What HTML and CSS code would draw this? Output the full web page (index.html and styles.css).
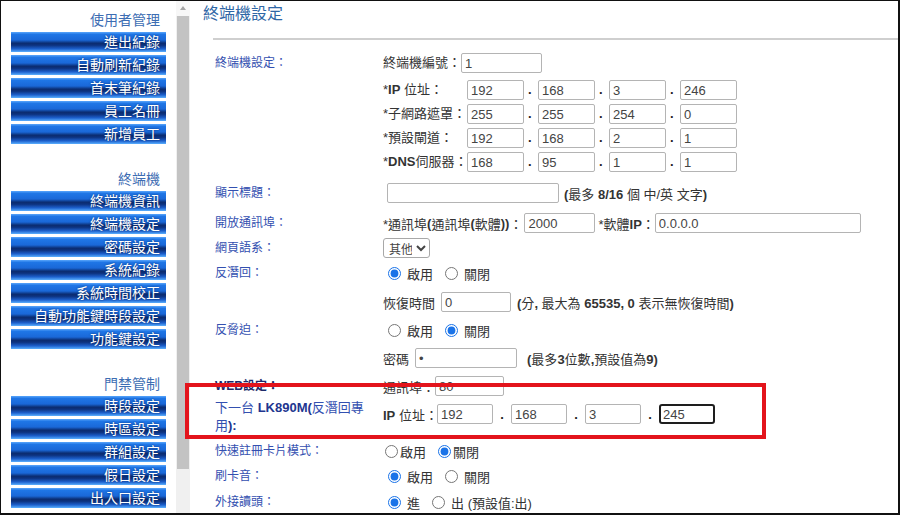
FILE: index.html
```html
<!DOCTYPE html>
<html>
<head>
<meta charset="utf-8">
<title>終端機設定</title>
<link rel="stylesheet" href="styles.css">
</head>
<body>
<div class="frame">

  <div class="menu">
    <div class="group">
      <div class="group-title">使用者管理</div>
      <a class="btn">進出紀錄</a>
      <a class="btn">自動刷新紀錄</a>
      <a class="btn">首末筆紀錄</a>
      <a class="btn">員工名冊</a>
      <a class="btn">新增員工</a>
    </div>
    <div class="group">
      <div class="group-title">終端機</div>
      <a class="btn">終端機資訊</a>
      <a class="btn">終端機設定</a>
      <a class="btn">密碼設定</a>
      <a class="btn">系統紀錄</a>
      <a class="btn">系統時間校正</a>
      <a class="btn">自動功能鍵時段設定</a>
      <a class="btn">功能鍵設定</a>
    </div>
    <div class="group">
      <div class="group-title">門禁管制</div>
      <a class="btn">時段設定</a>
      <a class="btn">時區設定</a>
      <a class="btn">群組設定</a>
      <a class="btn">假日設定</a>
      <a class="btn">出入口設定</a>
    </div>
  </div>

  <div class="scroll">
    <div class="scroll-up"><span class="arrow"></span></div>
    <div class="thumb"></div>
  </div>

  <div class="main">
    <h1 class="page-title">終端機設定</h1>
    <div class="rule"></div>

    <div class="form">
      <div class="row h130">
        <div class="label">終端機設定：</div>
        <div class="value stack">
          <div class="sub first">終端機編號：<input class="txt w-id" value="1"></div>
          <div class="sub"><span class="sub-label">*<b>IP</b> 位址：</span><input class="txt ip" value="192"><span class="dot">.</span><input class="txt ip" value="168"><span class="dot">.</span><input class="txt ip" value="3"><span class="dot">.</span><input class="txt ip" value="246"></div>
          <div class="sub"><span class="sub-label">*子網路遮罩：</span><input class="txt ip" value="255"><span class="dot">.</span><input class="txt ip" value="255"><span class="dot">.</span><input class="txt ip" value="254"><span class="dot">.</span><input class="txt ip" value="0"></div>
          <div class="sub"><span class="sub-label">*預設閘道：</span><input class="txt ip" value="192"><span class="dot">.</span><input class="txt ip" value="168"><span class="dot">.</span><input class="txt ip" value="2"><span class="dot">.</span><input class="txt ip" value="1"></div>
          <div class="sub"><span class="sub-label">*<b>DNS</b>伺服器：</span><input class="txt ip" value="168"><span class="dot">.</span><input class="txt ip" value="95"><span class="dot">.</span><input class="txt ip" value="1"><span class="dot">.</span><input class="txt ip" value="1"></div>
        </div>
      </div>

      <div class="row h30">
        <div class="label">顯示標題：</div>
        <div class="value"><input class="txt w-title" value=""><span class="note"><b>(</b>最多 <b>8/16</b> 個 中/英 文字<b>)</b></span></div>
      </div>

      <div class="row h25">
        <div class="label">開放通訊埠：</div>
        <div class="value">*通訊埠<b>(</b>通訊埠<b>(</b>軟體<b>))</b>：<input class="txt w-port" value="2000"><span class="gap3">*軟體<b>IP</b>：</span><input class="txt w-softip" value="0.0.0.0"></div>
      </div>

      <div class="row h25">
        <div class="label">網頁語系：</div>
        <div class="value"><select class="sel"><option>其他</option></select></div>
      </div>

      <div class="row h29">
        <div class="label">反潛回：</div>
        <div class="value"><label class="opt"><input type="radio" name="apb" checked>啟用</label><label class="opt"><input type="radio" name="apb">關閉</label></div>
      </div>

      <div class="row h28">
        <div class="label"></div>
        <div class="value">恢復時間<input class="txt w-time" value="0"><span class="note wide"><b>(</b>分<b>,</b> 最大為 <b>65535, 0</b> 表示無恢復時間<b>)</b></span></div>
      </div>

      <div class="row h28">
        <div class="label">反脅迫：</div>
        <div class="value"><label class="opt"><input type="radio" name="duress">啟用</label><label class="opt"><input type="radio" name="duress" checked>關閉</label></div>
      </div>

      <div class="row h28">
        <div class="label"></div>
        <div class="value">密碼<input class="txt w-pwd" type="password" value="9"><span class="note far"><b>(</b>最多<b>3</b>位數<b>,</b>預設值為<b>9)</b></span></div>
      </div>

      <div class="row h28">
        <div class="label dark">WEB設定：</div>
        <div class="value">通訊埠：<input class="txt w-web" value="80"></div>
      </div>

      <div class="row h37">
        <div class="label two-line">下一台 <b>LK890M(</b>反潛回專用<b>):</b></div>
        <div class="value"><span class="ip-label"><b>IP</b> 位址：</span><input class="txt ip next" value="192"><span class="dot wide">.</span><input class="txt ip next" value="168"><span class="dot wide">.</span><input class="txt ip next" value="3"><span class="dot wide">.</span><input class="txt ip next focus" value="245"></div>
      </div>

      <div class="row h25">
        <div class="label">快速註冊卡片模式：</div>
        <div class="value"><label class="opt tight"><input type="radio" name="quick">啟用</label><label class="opt tight"><input type="radio" name="quick" checked>關閉</label></div>
      </div>

      <div class="row h26">
        <div class="label">刷卡音：</div>
        <div class="value"><label class="opt"><input type="radio" name="beep" checked>啟用</label><label class="opt"><input type="radio" name="beep">關閉</label></div>
      </div>

      <div class="row h22">
        <div class="label">外接讀頭：</div>
        <div class="value"><label class="opt"><input type="radio" name="reader" checked>進</label><label class="opt"><input type="radio" name="reader">出 (預設值:出)</label></div>
      </div>
    </div>
  </div>

  <div class="mark"></div>
</div>
</body>
</html>
```

FILE: styles.css
```css
body {
  margin: 0;
  background: #fff;
  font-family: "Liberation Sans", "Noto Sans CJK TC", sans-serif;
  color: #333;
}

.frame {
  position: relative;
  box-sizing: border-box;
  width: 900px;
  height: 515px;
  border: 1px solid #111;
  border-right-width: 2px;
  border-bottom-width: 2px;
  display: grid;
  grid-template-columns: 175px 14px 1fr;
  overflow: hidden;
}

/* left menu */

.menu {
  padding-top: 9px;
}

.group + .group {
  margin-top: 25px;
}

.group-title {
  height: 20px;
  line-height: 20px;
  margin-bottom: 2px;
  padding-right: 16px;
  text-align: right;
  font-size: 14px;
  color: #3d6db3;
}

.btn {
  display: block;
  height: 20px;
  line-height: 20px;
  margin: 0 10px 3px 10px;
  padding-right: 6px;
  text-align: right;
  font-size: 14px;
  color: #fff;
  text-shadow: 0 0 2px #0a2a6a;
  background: linear-gradient(#5aa6fb 0%, #1f76e6 12%, #1a68d8 40%, #0b2c70 56%, #0d327e 66%, #1c5fcc 84%, #5bb0ff 100%);
}

.scroll {
  background: #f0f0f0;
  display: flex;
  flex-direction: column;
  align-items: center;
}

.scroll-up {
  width: 100%;
  height: 15px;
  background: #f7f7f7;
  display: flex;
  justify-content: center;
}

.arrow {
  margin-top: 5px;
  width: 0;
  height: 0;
  border-left: 3px solid transparent;
  border-right: 3px solid transparent;
  border-bottom: 4px solid #a3a3a3;
}

.thumb {
  width: 12px;
  height: 453px;
  background: #c3c3c3;
}

/* main page */

.main {
  padding-left: 13px;
}

.page-title {
  margin: 0;
  padding-top: 3px;
  height: 20px;
  line-height: 20px;
  font-size: 16px;
  font-weight: normal;
  color: #2f67a6;
}

.rule {
  height: 2px;
  margin: 14px 0 0 10px;
  background: #cfcfcf;
}

.form {
  margin-top: 13px;
  padding-left: 12px;
}

.row {
  display: grid;
  grid-template-columns: 168px 1fr;
  align-items: start;
}

.h22 { height: 22px; }
.h25 { height: 25px; }
.h26 { height: 26px; }
.h28 { height: 28px; }
.h29 { height: 29px; }
.h30 { height: 30px; }
.h37 { height: 37px; }
.h130 { height: 130px; }

.label {
  line-height: 20px;
  font-size: 12px;
  color: #3350b0;
}

.label.dark {
  color: #1c2a68;
  font-weight: bold;
}

.label.two-line {
  width: 156px;
  margin-top: -5px;
  line-height: 18px;
  font-size: 13px;
}

.label b {
  color: #22358f;
}

.value {
  display: flex;
  align-items: center;
  height: 20px;
  font-size: 13px;
  white-space: nowrap;
}

.value.stack {
  display: block;
  height: auto;
}

.sub {
  display: flex;
  align-items: flex-start;
  height: 24px;
  line-height: 20px;
}

.sub.first {
  height: 27px;
}

.sub-label {
  width: 84px;
}

.ip-label {
  width: 54px;
}

.txt {
  box-sizing: border-box;
  height: 20px;
  margin: 0;
  padding: 0 3px;
  border: 1px solid #b4b4b4;
  border-radius: 2px;
  font-family: "Liberation Sans", sans-serif;
  font-size: 13px;
  color: #444;
  background: #fff;
}

.txt.focus {
  border: 2px solid #1e1e1e;
  border-radius: 3px;
  padding: 0 2px;
}

.ip { width: 57px; }
.ip.next { width: 56px; }
.w-id { width: 81px; }
.w-title { width: 172px; margin-left: 4px; }
.w-port { width: 71px; margin-left: 2px; }
.w-softip { width: 206px; }
.w-time { width: 70px; margin-left: 6px; }
.w-pwd { width: 102px; margin-left: 6px; }
.w-web { width: 69px; }

.dot {
  box-sizing: border-box;
  width: 14px;
  padding-left: 4px;
  font-weight: bold;
  color: #222;
}

.dot.wide {
  width: 18px;
  padding-left: 0;
  text-align: center;
}

.note {
  margin-left: 5px;
}

.note.wide {
  margin-left: 6px;
}

.note.far {
  margin-left: 10px;
}

.gap3 {
  margin-left: 3px;
}

.sel {
  box-sizing: border-box;
  width: 47px;
  height: 20px;
  margin: 0;
  padding: 0 1px;
  border: 1px solid #a8a8a8;
  border-radius: 3px;
  font-family: "Noto Sans CJK TC", sans-serif;
  font-size: 12px;
  color: #444;
  background: #fff;
}

.opt {
  display: inline-flex;
  align-items: center;
  margin-right: 7px;
}

.opt input {
  width: 13px;
  height: 13px;
  margin: 0 6px 0 5px;
  accent-color: #1a73e8;
}

.opt.tight {
  margin-right: 10px;
}

.opt.tight input {
  margin: 0 2px 0 2px;
}

/* annotation drawn over the screenshot */
.mark {
  position: absolute;
  left: 184px;
  top: 382px;
  width: 581px;
  height: 56px;
  box-sizing: border-box;
  border: 4px solid #e3141c;
}
```
